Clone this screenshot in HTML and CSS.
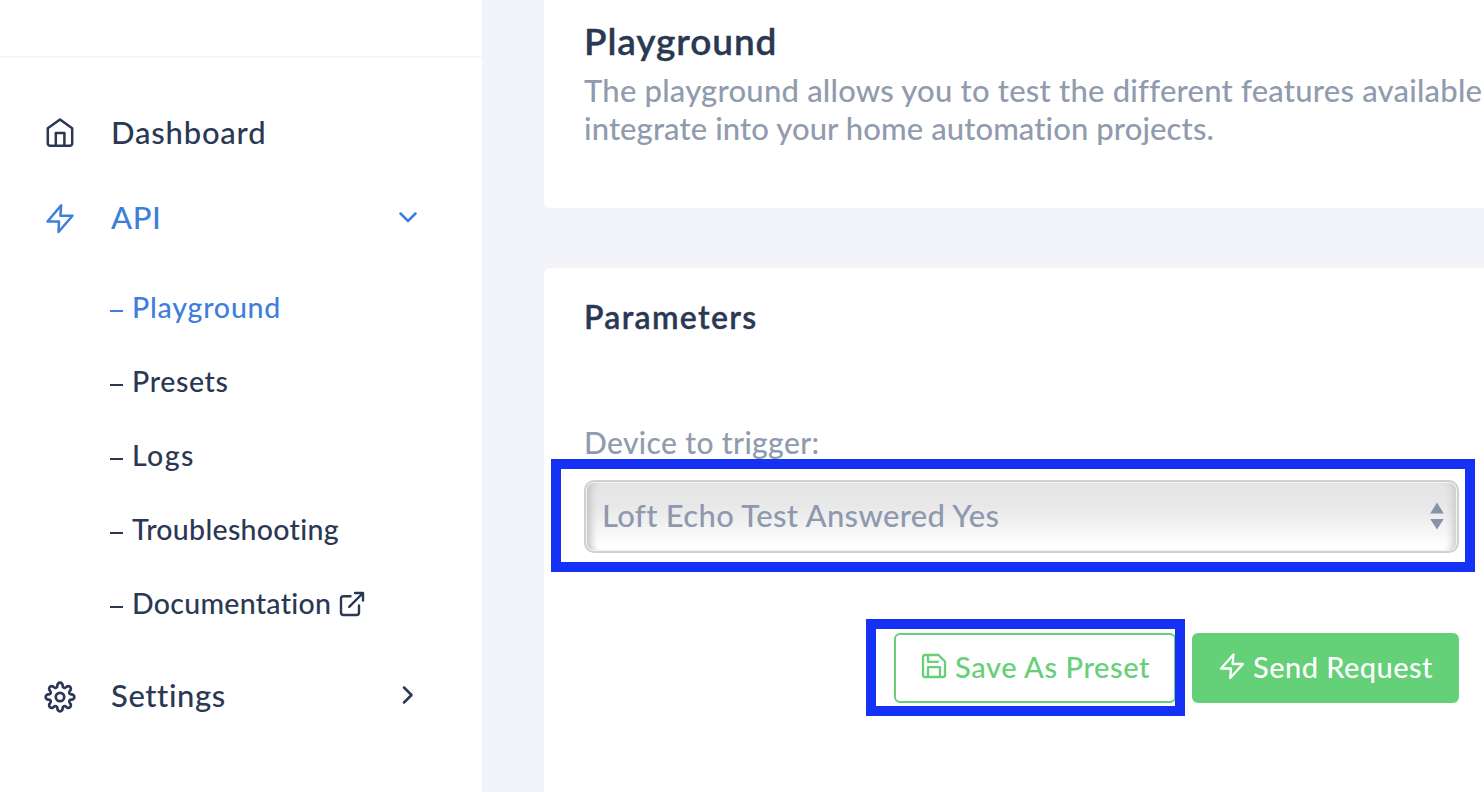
FILE: index.html
```html
<!DOCTYPE html>
<html lang="en">
<head>
<meta charset="utf-8">
<title>Playground</title>
<link rel="stylesheet" href="styles.css">
</head>
<body>
<div class="app">
  <aside class="sidebar">
    <div class="brand"></div>
    <nav class="menu">
      <a class="item">
        <svg class="item-icon" viewBox="0 0 32 32"><path d="M16 2.500 3.800 11.200V26.500a2.300 2.300 0 0 0 2.300 2.300H25.900a2.300 2.300 0 0 0 2.300-2.300V11.200ZM11.800 28.800V16H20.400V28.800"/></svg>
        <span class="t-dashboard">Dashboard</span>
      </a>
      <a class="item active">
        <svg class="item-icon" viewBox="0 0 32 32"><path d="M17.200 3.200 3.500 19.500H15L14.500 30 28.500 13.700H16.400Z"/></svg>
        <span class="t-api">API</span>
        <svg class="chevron" viewBox="0 0 20 20"><path d="m2.500 6.500 7.500 7.500 7.500-7.500"/></svg>
      </a>
      <div class="submenu">
        <a class="sub active"><i class="dash"></i><span class="t-play">Playground</span></a>
        <a class="sub"><i class="dash"></i><span class="t-presets">Presets</span></a>
        <a class="sub"><i class="dash"></i><span class="t-logs">Logs</span></a>
        <a class="sub"><i class="dash"></i><span class="t-trouble">Troubleshooting</span></a>
        <a class="sub"><i class="dash"></i><span class="t-docs">Documentation</span>
          <svg class="external" viewBox="0 0 26 26"><path d="M11.500 5.200H4.500A2.500 2.500 0 0 0 2 7.700V21.500A2.500 2.500 0 0 0 4.500 24H17.500A2.500 2.500 0 0 0 20 21.500V14.500M10.200 15.800 24 2M16 2H24V9.500"/></svg>
        </a>
      </div>
      <a class="item settings">
        <svg class="item-icon gear" viewBox="0 0 32 32"><circle cx="16" cy="16" r="4.200"/><path d="M27.300 13.390A2.635 2.635 0 1 1 27.300 18.610A2.060 2.060 0 0 0 25.840 22.150A2.635 2.635 0 1 1 22.150 25.840A2.060 2.060 0 0 0 18.610 27.300A2.635 2.635 0 1 1 13.390 27.300A2.060 2.060 0 0 0 9.850 25.840A2.635 2.635 0 1 1 6.160 22.150A2.060 2.060 0 0 0 4.700 18.610A2.635 2.635 0 1 1 4.700 13.390A2.060 2.060 0 0 0 6.160 9.850A2.635 2.635 0 1 1 9.850 6.160A2.060 2.060 0 0 0 13.390 4.700A2.635 2.635 0 1 1 18.610 4.700A2.060 2.060 0 0 0 22.150 6.160A2.635 2.635 0 1 1 25.840 9.850A2.060 2.060 0 0 0 27.300 13.390Z"/></svg>
        <span class="t-settings">Settings</span>
        <svg class="chevron" viewBox="0 0 20 20"><path d="m6 2.500 7.500 7.500L6 17.500"/></svg>
      </a>
    </nav>
  </aside>
  <main class="content">
    <section class="card intro">
      <h1>Playground</h1>
      <p><span class="line l1">The playground allows you to test the different features available</span><span class="line l2">integrate into your home automation projects.</span></p>
    </section>
    <section class="card params">
      <h2>Parameters</h2>
      <label class="label">Device to trigger:</label>
      <div class="field">
        <div class="select"><span class="t-select">Loft Echo Test Answered Yes</span>
          <svg class="arrows" viewBox="0 0 14 28"><path d="M7 0.500 13.800 11.500H.2ZM7 27.500 13.800 17H.2Z"/></svg>
        </div>
        <div class="mark"></div>
      </div>
      <div class="actions">
        <div class="save-wrap">
          <button class="btn outline"><svg class="btn-icon" viewBox="0 0 26 26"><path d="M4 2H17.500L24 8.500V22A2 2 0 0 1 22 24H4A2 2 0 0 1 2 22V4A2 2 0 0 1 4 2ZM7 24V14.200H19V24M7 2V8.800H17"/></svg><span class="t-save">Save As Preset</span></button>
          <div class="mark"></div>
        </div>
        <button class="btn solid"><svg class="btn-icon" viewBox="0 0 26 26"><path d="M14.500 1.500 2 15.500H12L11.200 25 24 11H13.600Z"/></svg><span class="t-send">Send Request</span></button>
      </div>
    </section>
  </main>
</div>
</body>
</html>
```
FILE: styles.css
```css
* { box-sizing: border-box; }
body {
  margin: 0;
  font-family: Lato, "Open Sans", sans-serif;
  font-weight: 500;
  font-variant-ligatures: none;
  color: #2b3854;
  background: #f3f4fa;
  overflow: hidden;
}
svg { fill: none; stroke: currentColor; stroke-linecap: round; stroke-linejoin: round; flex: none; }
span { white-space: nowrap; }
.app { display: flex; width: 1484px; height: 792px; overflow: hidden; }

.sidebar { width: 482px; flex: none; background: #fff; }
.brand { height: 58px; border-bottom: 2px solid #f5f6f8; }
.menu { padding-top: 31px; }
.item { display: flex; align-items: center; height: 85px; padding: 0 64px 0 44px; font-size: 31px; }
.item-icon { width: 32px; height: 32px; margin: 2px 35px 0 0; stroke-width: 2.500; }
.gear { margin-top: 4px; stroke-width: 2.700; }
.chevron { width: 20px; height: 20px; margin: 1px 0 0 auto; stroke-width: 2.500; }
.active { color: #3f7fdb; }
.submenu { padding: 11px 0 12px 110px; }
.sub { display: flex; align-items: center; height: 74px; font-size: 28.500px; }
.dash { width: 13px; height: 2px; margin: 7px 9px 0 0; background: currentColor; }
.external { width: 26px; height: 26px; margin: 1px 0 0 8px; stroke-width: 2.400; }
.t-dashboard { letter-spacing: .8px; }
.t-api { letter-spacing: .6px; }
.t-play { letter-spacing: .8px; }
.t-presets { letter-spacing: .65px; }
.t-logs { letter-spacing: 1.4px; }
.t-trouble { letter-spacing: .3px; }
.t-docs { letter-spacing: .3px; }
.t-settings { letter-spacing: .6px; }

.content { width: 940px; margin-left: 62px; display: flex; flex-direction: column; gap: 60px; }
.card { background: #fff; padding-left: 40px; }
.intro { height: 208px; padding-top: 19px; border-radius: 0 0 0 6px; }
h1, h2, p { margin: 0; }
h1, h2 { -webkit-text-stroke: .35px currentColor; }
h1 { font-size: 37px; font-weight: 600; line-height: 44px; letter-spacing: .9px; }
p { margin-top: 8px; font-size: 31px; line-height: 38px; color: #919bae; }
.line { display: block; }
.l1 { letter-spacing: .22px; }
.l2 { letter-spacing: .1px; }
.params { height: 524px; padding-top: 30px; border-radius: 6px 0 0 0; }
h2 { font-size: 32px; font-weight: 600; line-height: 38px; letter-spacing: 1.3px; }
.label { display: block; margin-top: 87px; font-size: 30px; line-height: 38px; color: #919bae; letter-spacing: .38px; }
.field { position: relative; width: 875px; margin-top: 19px; }
.select {
  display: flex; align-items: center; justify-content: space-between;
  height: 73px; padding: 0 13px 3px 16px;
  border: 2px solid #d0d0d0; border-radius: 10px;
  background: linear-gradient(#e5e5e5 0, #e8e8e8 35%, #fff 95%);
  box-shadow: inset 0 0 0 1px #f4f4f4, inset 10px 0 7px -5px #c4c4c4, inset -10px 0 7px -5px #cecece;
  font-size: 31px; color: #8e99af;
}
.t-select { letter-spacing: .33px; }
.arrows { width: 14px; height: 28px; margin-top: 2px; fill: #8793aa; stroke: none; }
.mark { position: absolute; border: 10px solid #1531f5; pointer-events: none; }
.field .mark { inset: -21px -16px -19px -33px; }
.actions { display: flex; justify-content: flex-end; gap: 16px; width: 875px; margin-top: 80px; }
.save-wrap { position: relative; }
.save-wrap .mark { inset: -14px -9px -13px -28px; }
.btn { display: flex; align-items: center; height: 70px; padding: 0 0 4px 25px; border: 2px solid #66cf78; border-radius: 6px; font-family: inherit; font-weight: 500; font-size: 29px; }
.btn-icon { width: 26px; height: 26px; margin-right: 8px; stroke-width: 2.300; }
.outline { width: 282px; background: #fff; color: #66cf78; }
.solid { width: 267px; background: #64d077; color: #fff; }
.t-save { letter-spacing: .6px; }
.t-send { letter-spacing: .45px; }
```
